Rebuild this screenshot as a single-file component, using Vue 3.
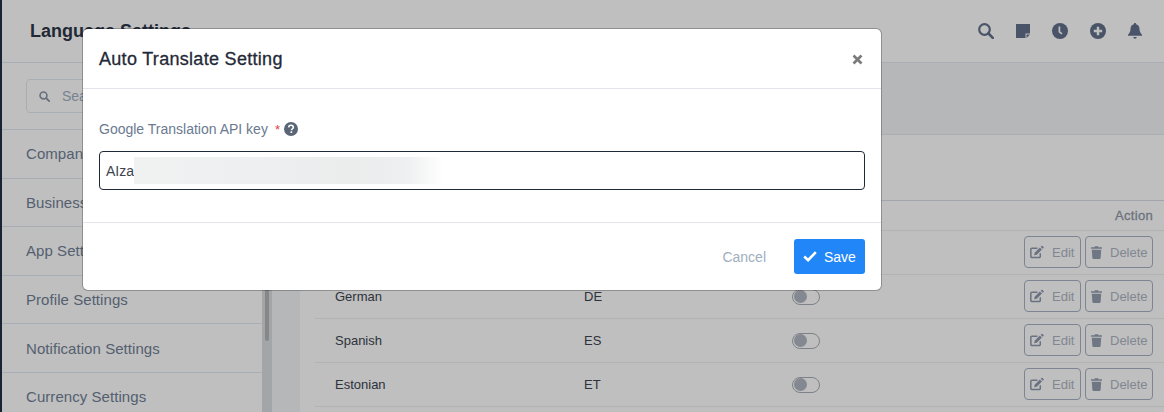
<template>
  <div class="page">
    <aside class="rail"></aside>
    <div class="main">
      <header class="topbar">
        <h1 class="title">Language Settings</h1>
        <div class="top-icons">
          <svg width="16" height="16" viewBox="0 0 16 16"><circle cx="6.500" cy="6.500" r="5.300" fill="none" stroke="#63718b" stroke-width="2.200"/><path d="M10.500 10.500l4.300 4.300" stroke="#63718b" stroke-width="2.600" stroke-linecap="round"/></svg>
          <svg width="14" height="14" viewBox="0 0 14 14"><path d="M0 0h14v9.500h-4.500v4.500H0z" fill="#63718b"/><path d="M10.500 10.500H14L10.500 14z" fill="#63718b"/></svg>
          <svg width="16" height="16" viewBox="0 0 16 16"><circle cx="8" cy="8" r="8" fill="#63718b"/><path d="M7.400 3.500v5.300l2.600 2" fill="none" stroke="#fff" stroke-width="1.700"/></svg>
          <svg width="16" height="16" viewBox="0 0 16 16"><circle cx="8" cy="8" r="8" fill="#63718b"/><path d="M8 3.800v8.400M3.800 8h8.400" stroke="#fff" stroke-width="2.400"/></svg>
          <svg width="14" height="16" viewBox="0 0 14 16"><path d="M7 0c.7 0 1.200.5 1.200 1.200 2.400.5 3.300 2.500 3.300 4.800 0 3 1.500 4.500 2.500 5.800v1H0v-1C1 10.500 2.500 9 2.500 6c0-2.300.9-4.300 3.300-4.800C5.800.5 6.300 0 7 0z" fill="#63718b"/><path d="M5.300 14h3.400a1.700 1.700 0 0 1-3.400 0z" fill="#63718b"/></svg>
        </div>
      </header>
      <div class="content">
        <nav class="side">
          <div class="side-list">
            <div class="search-wrap">
              <div class="search">
                <svg width="11" height="11" viewBox="0 0 16 16"><circle cx="6.500" cy="6.500" r="5" fill="none" stroke="#8c98ac" stroke-width="2.400"/><path d="M10.500 10.500l4.300 4.300" stroke="#8c98ac" stroke-width="2.800" stroke-linecap="round"/></svg>
                <span>Search</span>
              </div>
            </div>
            <a v-for="item in menu" :key="item" class="side-item">{{ item }}</a>
          </div>
          <div class="scroll"><div class="thumb"></div></div>
        </nav>
        <section class="panel">
          <div class="card">
            <div class="table">
              <div class="table-head">Action</div>
              <div v-for="row in rows" :key="row.name" class="row">
                <span class="c-name">{{ row.name }}</span>
                <span class="c-code">{{ row.code }}</span>
                <span class="toggle"><i></i></span>
                <div class="actions">
                  <button class="act edit">
                    <svg width="14" height="14" viewBox="0 0 15 14"><path d="M11 8.300v3.500a1.100 1.100 0 0 1-1.100 1.100H2A1.100 1.100 0 0 1 .9 11.800V4A1.100 1.100 0 0 1 2 2.900h6" fill="none" stroke="#8d98ac" stroke-width="1.600"/><path d="M5 7.800l-.5 2.700 2.700-.5 5.600-5.600-2.200-2.200zM11.400 1.400l2.200 2.200.9-.9a.8.800 0 0 0 0-1.100L13.400.5a.8.800 0 0 0-1.100 0z" fill="#8d98ac"/></svg>
                    Edit
                  </button>
                  <button class="act del">
                    <svg width="11" height="13" viewBox="0 0 11 13"><path d="M0 1.200h3.400l.5-1h3.200l.5 1H11v1.500H0zM.8 3.700h9.400l-.6 8.400a1 1 0 0 1-1 .9H2.400a1 1 0 0 1-1-.9z" fill="#949eb1"/></svg>
                    Delete
                  </button>
                </div>
              </div>
            </div>
          </div>
        </section>
      </div>
    </div>
    <div class="overlay">
      <div class="modal">
        <div class="modal-head">
          <h2>Auto Translate Setting</h2>
          <svg width="11" height="11" viewBox="0 0 11 11"><path d="M1.500 1.500l8 8M9.500 1.500l-8 8" stroke="#7a7a7a" stroke-width="2.600"/></svg>
        </div>
        <div class="modal-body">
          <label class="field-label">
            Google Translation API key
            <span class="req">*</span>
            <svg width="14" height="14" viewBox="0 0 14 14"><circle cx="7" cy="7" r="7" fill="#5a6578"/><path d="M4.700 5.400c.1-1.400 1-2.100 2.300-2.100s2.300.8 2.300 1.900c0 1.600-1.800 1.500-1.800 3.100" fill="none" stroke="#fff" stroke-width="1.600"/><rect x="6.500" y="9.300" width="1.700" height="1.700" fill="#fff"/></svg>
          </label>
          <div class="key-input">
            <span>AIza</span>
            <div class="blur"></div>
          </div>
        </div>
        <div class="modal-foot">
          <button class="cancel">Cancel</button>
          <button class="save">
            <svg width="14" height="11" viewBox="0 0 14 11"><path d="M1.200 5.500l3.900 3.700 7.700-8" fill="none" stroke="#fff" stroke-width="2.600"/></svg>
            Save
          </button>
        </div>
      </div>
    </div>
  </div>
</template>

<script setup>
const menu = ['Company Settings', 'Business Settings', 'App Settings', 'Profile Settings', 'Notification Settings', 'Currency Settings']
const rows = [
  { name: 'English', code: 'EN' },
  { name: 'German', code: 'DE' },
  { name: 'Spanish', code: 'ES' },
  { name: 'Estonian', code: 'ET' },
]
</script>

<style>
html, body { margin: 0; overflow: hidden; }
</style>

<style scoped>
.page { position: relative; display: flex; width: 1164px; height: 412px; overflow: hidden; background: #f3f4f6; font-family: "Liberation Sans", Arial, sans-serif; }
.rail { width: 2px; flex: none; background: #232f42; }
.main { flex: 1; display: flex; flex-direction: column; min-width: 0; }
.topbar { height: 63px; flex: none; box-sizing: border-box; background: #fff; border-bottom: 1px solid #e2e8f0; display: flex; align-items: center; justify-content: space-between; padding: 0 22px 0 28px; }
.title { margin: 0; font-size: 18px; font-weight: 700; color: #2d3748; }
.top-icons { display: flex; align-items: center; gap: 22px; }
.content { flex: 1; display: flex; min-height: 0; }
.side { display: flex; width: 270px; flex: none; }
.side-list { width: 260px; background: #fff; }
.search-wrap { height: 67px; box-sizing: border-box; padding: 16px 0 0 24px; border-bottom: 1px solid #e2e8f0; }
.search { width: 230px; height: 34px; box-sizing: border-box; border: 1px solid #e2e8f0; border-radius: 4px; display: flex; align-items: center; gap: 12px; padding-left: 12px; font-size: 14px; color: #a0aec0; }
.side-item { display: flex; align-items: center; height: 48.600px; box-sizing: border-box; padding-left: 24px; font-size: 15px; letter-spacing: 0.060px; color: #718096; border-bottom: 1px solid #e2e8f0; }
.scroll { width: 10px; background: #dadee1; }
.thumb { width: 4px; height: 128px; margin: 150px 0 0 3px; border-radius: 2px; background: #b5b5b5; }
.panel { flex: 1; min-width: 0; padding: 71px 0 0 28px; }
.card { height: 100%; padding-top: 65px; box-sizing: border-box; background: #fff; border-top: 1px solid #e2e8f0; }
.table { border-top: 1px solid #d8dee6; }
.table-head { height: 30px; box-sizing: border-box; margin-left: 15px; padding: 7px 11px 0 0; text-align: right; font-size: 13px; letter-spacing: 0.300px; color: #8f99a8; -webkit-text-stroke: 0.300px #8f99a8; border-bottom: 1px solid #edf0f4; }
.row { display: grid; grid-template-columns: 249px 208px 1fr auto; align-items: center; height: 44px; box-sizing: border-box; margin-left: 15px; padding: 0 11px 0 20px; font-size: 13px; color: #3c4450; border-bottom: 1px solid #edf0f4; }
.toggle { display: block; width: 28px; height: 16px; box-sizing: border-box; border: 1px solid #a8adb5; border-radius: 8px; background: #fff; }
.toggle i { display: block; width: 13px; height: 13px; margin: 0.500px 0 0 0.500px; border-radius: 50%; background: #b0b6c2; }
.actions { display: flex; gap: 4px; margin-bottom: 2px; }
.act { display: flex; align-items: center; height: 32px; box-sizing: border-box; padding: 1px 0 0; border: 1px solid #a7b2c4; border-radius: 4px; background: transparent; font: 13px "Liberation Sans", Arial, sans-serif; color: #adb5c3; }
.edit { width: 57px; padding-left: 5px; gap: 8px; }
.del { width: 68px; padding-left: 5px; gap: 8px; }
.overlay { position: absolute; inset: 0; padding: 29px 0 0 83px; background: rgba(0, 0, 0, 0.25); }
.modal { width: 798px; height: 261px; box-sizing: border-box; background: #fff; border-radius: 5px; box-shadow: 0 0 0 1px rgba(0, 0, 0, 0.25); }
.modal-head { display: flex; align-items: center; justify-content: space-between; height: 60px; box-sizing: border-box; padding: 2px 18px 0 16px; border-bottom: 1px solid #e2e4e9; }
.modal-head h2 { margin: 0; font-size: 18px; font-weight: 400; letter-spacing: 0.300px; color: #1f2937; -webkit-text-stroke: 0.300px #1f2937; }
.modal-body { height: 134px; box-sizing: border-box; padding: 31px 16px 0; border-bottom: 1px solid #e2e4e9; }
.field-label { display: flex; align-items: center; height: 18px; font-size: 14px; color: #6b7a90; }
.req { margin: 0 4px 0 7px; color: #e53e3e; font-size: 13px; }
.key-input { display: flex; align-items: center; height: 39px; box-sizing: border-box; margin-top: 13px; padding-left: 6px; border: 1px solid #1f2937; border-radius: 4px; font-size: 14px; color: #3d4450; }
.blur { width: 309px; height: 27px; background: linear-gradient(90deg, #f0f1f1 0, #eeeff0 40%, #ebecec 70%, #eeeff0 88%, #fff 100%); }
.modal-foot { display: flex; align-items: center; justify-content: flex-end; gap: 28px; padding: 16px 16px 0; }
.cancel { padding: 0; border: 0; background: none; font: 14px "Liberation Sans", Arial, sans-serif; color: #a0aec0; }
.save { display: flex; align-items: center; gap: 7px; width: 71px; height: 35px; box-sizing: border-box; padding: 0 0 0 9px; border: 0; border-radius: 3px; background: #2186f8; font: 14px "Liberation Sans", Arial, sans-serif; color: #fff; }
</style>
